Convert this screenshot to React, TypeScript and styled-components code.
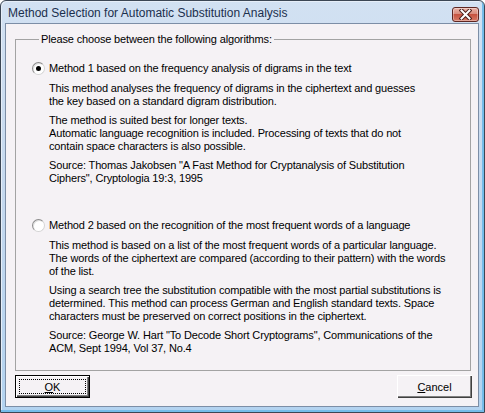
import React from 'react';
import styled, { createGlobalStyle } from 'styled-components';

const Global = createGlobalStyle`
  html, body { margin: 0; padding: 0; background: #ffffff; }
  body { width: 485px; height: 413px; overflow: hidden; }
  *, *::before, *::after { box-sizing: border-box; }
`;

const Frame = styled.div`
  width: 485px;
  height: 413px;
  display: flex;
  flex-direction: column;
  border: 1px solid #3b4654;
  border-radius: 6px 6px 0 0;
  background: linear-gradient(180deg, #d2e1f2 0%, #c4d8ee 50%, #b3d3f0 100%);
  box-shadow: inset -2px -2px 0 #74bce9, inset 1px 1px 0 #e6eef8;
  padding: 0 5px 5px 4px;
  font-family: "Liberation Sans", Arial, sans-serif;
`;

const TitleBar = styled.div`
  height: 22px;
  display: flex;
  align-items: center;
  justify-content: space-between;
  padding-left: 3px;
`;

const Title = styled.div`
  font-family: "Liberation Sans", Arial, sans-serif;
  font-size: 12px;
  color: #1b2f4d;
  letter-spacing: 0;
  padding-top: 1px;
`;

const CloseButton = styled.div`
  width: 27px;
  height: 15px;
  margin-top: 5px;
  border: 1px solid #5e2722;
  border-radius: 3px;
  background: linear-gradient(180deg, #eab3a8 0%, #d98c7d 45%, #c65340 50%, #d77a66 100%);
  box-shadow: inset 0 0 0 1px rgba(255, 255, 255, 0.35);
  display: flex;
  align-items: center;
  justify-content: center;
`;

const Client = styled.div`
  flex: 1;
  display: flex;
  flex-direction: column;
  gap: 4px;
  background: #f5f2f5;
  border: 1px solid #7c8ea6;
  padding: 9px 7px 8px 9px;
  font-size: 11px;
  line-height: 13px;
  color: #000;
`;

const Group = styled.fieldset`
  flex: 1;
  margin: 0;
  padding: 16px 0 0 16px;
  border: 1px solid #a3a3a3;
  min-width: 0;
`;

const Legend = styled.legend`
  margin-left: 7px;
  padding: 0 2px;
  font-size: 11px;
  line-height: 13px;
  letter-spacing: -0.15px;
`;

const Option = styled.div<{ $gapAfter?: number }>`
  display: flex;
  flex-direction: column;
  gap: 7px;
  margin-bottom: ${p => p.$gapAfter ?? 0}px;
`;

const RadioRow = styled.label`
  display: flex;
  align-items: center;
  gap: 4px;
  height: 13px;
  letter-spacing: -0.15px;
  white-space: nowrap;
`;

const Radio = styled.span<{ $checked?: boolean }>`
  width: 13px;
  height: 13px;
  flex: none;
  border-radius: 50%;
  background: #ffffff;
  border: 1px solid;
  border-color: #8b8b8b #d4d4d4 #d4d4d4 #8b8b8b;
  box-shadow: inset 1px 1px 0 #e0e0e0;
  display: flex;
  align-items: center;
  justify-content: center;
  &::after {
    content: '';
    width: 5px;
    height: 5px;
    border-radius: 50%;
    background: ${p => (p.$checked ? '#000' : 'transparent')};
  }
`;

const Desc = styled.div`
  margin-left: 17px;
  display: flex;
  flex-direction: column;
  gap: 6px;
`;

const Para = styled.p`
  margin: 0;
  white-space: nowrap;
  letter-spacing: -0.15px;
`;

const ButtonRow = styled.div`
  display: flex;
  justify-content: space-between;
  margin-right: -1px;
`;

const Button = styled.button<{ $default?: boolean }>`
  width: 75px;
  height: 23px;
  padding: ${p => (p.$default ? '4px' : '3px')};
  border: none;
  background: #f5f2f5;
  font-family: "Liberation Sans", Arial, sans-serif;
  font-size: 11px;
  color: #000;
  display: flex;
  box-shadow: ${p =>
    p.$default
      ? 'inset 0 0 0 1px #000, inset 2px 2px 0 #fff, inset -2px -2px 0 #404040, inset -3px -3px 0 #808080'
      : 'inset 1px 1px 0 #fff, inset -1px -1px 0 #404040, inset -2px -2px 0 #808080'};
`;

const ButtonFace = styled.span<{ $focus?: boolean }>`
  flex: 1;
  display: flex;
  align-items: center;
  justify-content: center;
  border: 1px dotted ${p => (p.$focus ? '#000' : 'transparent')};
  u { text-decoration-thickness: 1px; text-underline-offset: 1px; }
`;

const method1 = [
  ['This method analyses the frequency of digrams in the ciphertext and guesses', 'the key based on a standard digram distribution.'],
  ['The method is suited best for longer texts.', 'Automatic language recognition is included. Processing of texts that do not', 'contain space characters is also possible.'],
  ['Source: Thomas Jakobsen "A Fast Method for Cryptanalysis of Substitution', 'Ciphers", Cryptologia 19:3, 1995'],
];

const method2 = [
  ['This method is based on a list of the most frequent words of a particular language.', 'The words of the ciphertext are compared (according to their pattern) with the words', 'of the list.'],
  ['Using a search tree the substitution compatible with the most partial substitutions is', 'determined. This method can process German and English standard texts. Space', 'characters must be preserved on correct positions in the ciphertext.'],
  ['Source: George W. Hart "To Decode Short Cryptograms", Communications of the', 'ACM, Sept 1994, Vol 37, No.4'],
];

const Paras: React.FC<{ paras: string[][] }> = ({ paras }) => (
  <Desc>
    {paras.map((lines, i) => (
      <Para key={i}>
        {lines.map((l, j) => (
          <React.Fragment key={j}>
            {j > 0 && <br />}
            {l}
          </React.Fragment>
        ))}
      </Para>
    ))}
  </Desc>
);

export default function App() {
  return (
    <>
      <Global />
      <Frame>
        <TitleBar>
          <Title>Method Selection for Automatic Substitution Analysis</Title>
          <CloseButton>
            <svg width="13" height="11" viewBox="0 0 13 11">
              <path d="M2.5 1.5 L10.5 9.5 M10.5 1.5 L2.5 9.5" stroke="#4a1f1a" strokeWidth="4" strokeLinecap="square" />
              <path d="M2.5 1.5 L10.5 9.5 M10.5 1.5 L2.5 9.5" stroke="#ffffff" strokeWidth="2" strokeLinecap="square" />
            </svg>
          </CloseButton>
        </TitleBar>
        <Client>
          <Group>
            <Legend>Please choose between the following algorithms:</Legend>
            <Option $gapAfter={34}>
              <RadioRow>
                <Radio $checked />
                <span>Method 1 based on the frequency analysis of digrams in the text</span>
              </RadioRow>
              <Paras paras={method1} />
            </Option>
            <Option>
              <RadioRow>
                <Radio />
                <span>Method 2 based on the recognition of the most frequent words of a language</span>
              </RadioRow>
              <Paras paras={method2} />
            </Option>
          </Group>
          <ButtonRow>
            <Button $default>
              <ButtonFace $focus>
                <span><u>O</u>K</span>
              </ButtonFace>
            </Button>
            <Button>
              <ButtonFace>
                <span><u>C</u>ancel</span>
              </ButtonFace>
            </Button>
          </ButtonRow>
        </Client>
      </Frame>
    </>
  );
}
